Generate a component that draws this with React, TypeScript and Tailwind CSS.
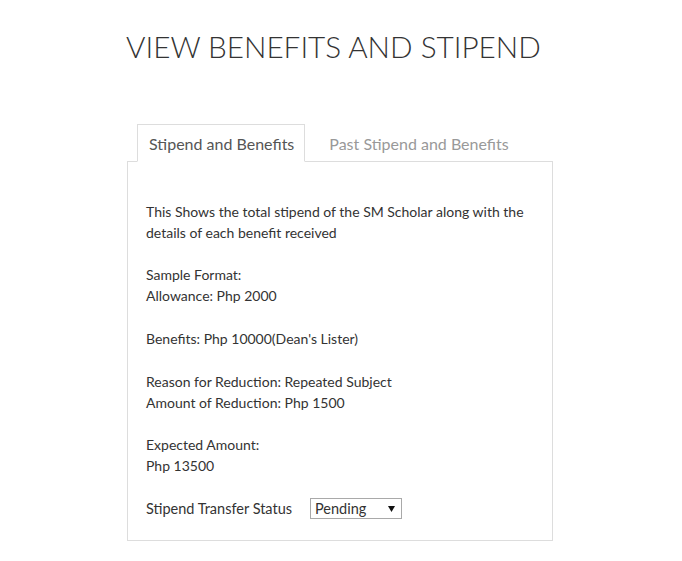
import React from "react";

export default function App() {
  return (
    <div className="min-h-[561px] bg-white text-[#333]" style={{ fontFamily: "Lato, 'Noto Sans', sans-serif" }}>
      <div className="ml-[127px] w-[426px] pt-[27px]">
        <h1 className="text-[29.7px] leading-[40px] font-light text-[#333] -ml-[1px]">VIEW BENEFITS AND STIPEND</h1>
        <div className="mt-[57px] flex pl-[10px]">
          <div className="relative -mb-px border border-b-white border-[#ddd] bg-white pl-[11px] pr-[10px] pt-[9px] pb-[6px] text-[16px] leading-[20px] text-[#555]">
            Stipend and Benefits
          </div>
          <div className="ml-[2px] border border-transparent pl-[21px] pr-[10px] pt-[9px] pb-[6px] text-[16px] leading-[20px] text-[#999]">
            Past Stipend and Benefits
          </div>
        </div>
        <div className="border border-[#ddd] px-[18px] pt-[39px] pb-[21px] text-[14px] leading-[21px] text-[#333]">
          <p>This Shows the total stipend of the SM Scholar along with the details of each benefit received</p>
          <div className="h-[21px]" />
          <p>Sample Format:</p>
          <p>Allowance: Php 2000</p>
          <div className="h-[22px]" />
          <p>Benefits: Php 10000(Dean's Lister)</p>
          <div className="h-[22px]" />
          <p>Reason for Reduction: Repeated Subject</p>
          <p>Amount of Reduction: Php 1500</p>
          <div className="h-[21px]" />
          <p>Expected Amount:</p>
          <p>Php 13500</p>
          <div className="h-[22px]" />
          <div className="flex items-center">
            <span className="w-[164px] shrink-0 text-[14.5px]">Stipend Transfer Status</span>
            <div className="flex h-[21px] w-[92px] items-center justify-between border border-[#a9a9a9] bg-white pl-[4px] pr-[5px]">
              <span className="text-[14.5px] leading-[18px] text-[#333]">Pending</span>
              <svg width="7" height="6" viewBox="0 0 7 6" className="mr-[1px]">
                <path d="M0 0 L7 0 L3.5 6 Z" fill="#111" />
              </svg>
            </div>
          </div>
        </div>
      </div>
    </div>
  );
}
